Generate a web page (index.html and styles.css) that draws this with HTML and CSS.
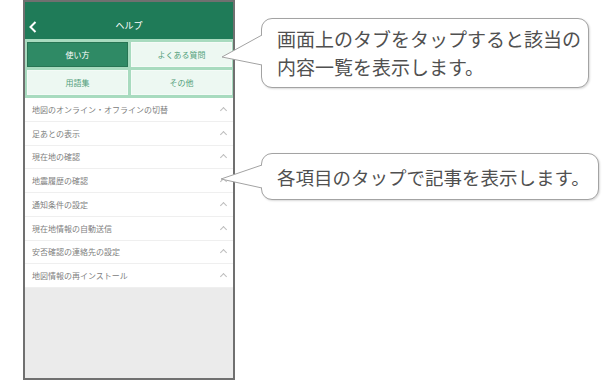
FILE: index.html
```html
<!DOCTYPE html>
<html lang="ja">
<head>
    <meta charset="UTF-8">
    <meta name="viewport" content="width=device-width, initial-scale=1.0">
    <title>ヘルプ</title>
    <link rel="stylesheet" href="styles.css">
</head>
<body>
    <div class="page">
        <div class="phone">
            <header class="bar">
                <svg class="back" width="8" height="12" viewBox="0 0 8 12">
                    <polyline points="6.5,1 1.5,6 6.5,11" fill="none" stroke="#fff" stroke-width="2"/>
                </svg>
                <h1>ヘルプ</h1>
            </header>

            <nav class="tabs">
                <button class="tab active">使い方</button>
                <button class="tab">よくある質問</button>
                <button class="tab">用語集</button>
                <button class="tab">その他</button>
            </nav>

            <ul class="topics">
                <li>地図のオンライン・オフラインの切替<span class="caret"></span></li>
                <li>足あとの表示<span class="caret"></span></li>
                <li>現在地の確認<span class="caret"></span></li>
                <li>地震履歴の確認<span class="caret"></span></li>
                <li>通知条件の設定<span class="caret"></span></li>
                <li>現在地情報の自動送信<span class="caret"></span></li>
                <li>安否確認の連絡先の設定<span class="caret"></span></li>
                <li>地図情報の再インストール<span class="caret"></span></li>
            </ul>
        </div>

        <div class="note note-tabs">
            <svg class="tail" width="44" height="90" viewBox="0 0 44 90">
                <polyline points="43,35 3,57 43,65" fill="#fff" stroke="#a3a3a3" stroke-width="1"/>
            </svg>
            <p>画面上のタブをタップすると該当の<br>内容一覧を表示します。</p>
        </div>

        <div class="note note-items">
            <svg class="tail" width="44" height="60" viewBox="0 0 44 60">
                <polyline points="43,25 2,39 43,48" fill="#fff" stroke="#a3a3a3" stroke-width="1"/>
            </svg>
            <p>各項目のタップで記事を表示します。</p>
        </div>
    </div>
</body>
</html>
```

FILE: styles.css
```css
body {
    margin: 0;
    background: #fff;
    font-family: "Noto Sans CJK JP", "Noto Sans", sans-serif;
}
.page {
    position: relative;
    width: 610px;
    height: 388px;
}
.phone {
    margin-left: 23px;
    width: 212px;
    height: 380px;
    box-sizing: border-box;
    border: 2px solid #707070;
    background: #ebebeb;
    display: flex;
    flex-direction: column;
}
.bar {
    position: relative;
    height: 37px;
    box-sizing: border-box;
    padding-top: 17px;
    background: #1f7b58;
}
.bar h1 {
    margin: 0;
    text-align: center;
    color: #fff;
    font-size: 9px;
    font-weight: normal;
    line-height: 14px;
}
.back {
    position: absolute;
    left: 4px;
    top: 19px;
}
.tabs {
    display: grid;
    grid-template-columns: 1fr 1fr;
    gap: 3px;
    padding: 3px 1px 3px 2px;
    background: #a8dbbf;
}
.tab {
    height: 25px;
    margin: 0;
    padding: 0;
    border: 1px solid #f4fbf7;
    background: #edf8f2;
    color: #529f7a;
    font-family: inherit;
    font-size: 8px;
}
.tab.active {
    border-color: #277553;
    background: #2f8a65;
    color: #fff;
}
.topics {
    list-style: none;
    margin: 0;
    padding: 0;
    background: #fff;
}
.topics li {
    display: flex;
    align-items: center;
    justify-content: space-between;
    height: 23.75px;
    box-sizing: border-box;
    padding: 0 7px 0 7px;
    border-bottom: 1px solid #efefef;
    color: #808080;
    font-size: 8px;
}
.caret {
    width: 4px;
    height: 4px;
    margin-top: 2px;
    border-left: 1px solid #bdbdbd;
    border-top: 1px solid #bdbdbd;
    transform: rotate(45deg);
}
.note {
    position: absolute;
    left: 261px;
    box-sizing: border-box;
    border: 1px solid #a3a3a3;
    border-radius: 11px;
    background: #fff;
    box-shadow: 1px 1px 2px rgba(0, 0, 0, 0.15);
    padding-left: 15px;
    color: #505050;
    font-size: 19px;
    white-space: nowrap;
}
.note p {
    margin: 0;
}
.tail {
    position: absolute;
    left: -43px;
}
.note-tabs {
    top: 18px;
    width: 328px;
    height: 70px;
    padding-top: 6px;
    line-height: 28px;
}
.note-tabs .tail {
    top: -19px;
}
.note-items {
    top: 153px;
    width: 338px;
    height: 47px;
    display: flex;
    align-items: center;
    font-size: 18.5px;
    line-height: 24px;
}
.note-items .tail {
    top: -14px;
}
```
